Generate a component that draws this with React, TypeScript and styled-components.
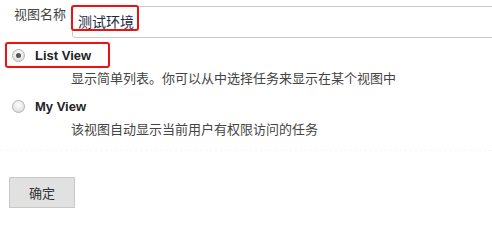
import React from 'react'
import styled, { createGlobalStyle } from 'styled-components';

const GlobalStyle = createGlobalStyle`
	html, body {
		margin: 0;
		padding: 0;
		background: #fff;
		overflow: hidden;
	}
	body {
		font-family: 'Liberation Sans', Arial, 'Noto Sans CJK SC', sans-serif;
		color: #333;
	}
`;

const Page = styled.div`
	width: 492px;
	height: 218px;
	overflow: hidden;
	padding-top: 6px;
	box-sizing: border-box;
`;

const NameRow = styled.div`
	display: flex;
	align-items: flex-start;
`;

const NameLabel = styled.div`
	width: 58px;
	padding-left: 14px;
	padding-top: 1px;
	font-size: 13px;
	line-height: 16px;
	color: #444;
	flex-shrink: 0;
`;

const InputWrap = styled.div`
	position: relative;
	flex-shrink: 0;
	width: 480px;
`;

const NameInput = styled.div`
	height: 32px;
	border: 1px solid #c9c9c9;
	border-radius: 3px;
	padding: 6px 0 0 5px;
	box-sizing: border-box;
	font-size: 14px;
	line-height: 18px;
	color: #1d2a44;
`;

const Highlight = styled.div<{ $left: number; $top: number; $width: number; $height: number }>`
	position: absolute;
	left: ${p => p.$left}px;
	top: ${p => p.$top}px;
	width: ${p => p.$width}px;
	height: ${p => p.$height}px;
	border: 2px solid #ee1111;
	border-radius: 3px;
	box-sizing: border-box;
	pointer-events: none;
`;

const Option = styled.div`
	margin-top: 5px;
`;

const OptionHead = styled.div`
	position: relative;
	display: flex;
	align-items: center;
	height: 24px;
	padding-left: 12px;
`;

const Radio = styled.span<{ $checked?: boolean }>`
	position: relative;
	width: 13px;
	height: 13px;
	border-radius: 50%;
	border: 1px solid #b4b4b4;
	box-sizing: border-box;
	background: radial-gradient(circle at 50% 35%, #fdfdfd 0%, #e6e6e6 60%, #d2d2d2 100%);
	flex-shrink: 0;

	&::after {
		content: '';
		display: ${p => (p.$checked ? 'block' : 'none')};
		position: absolute;
		left: 3px;
		top: 3px;
		width: 5px;
		height: 5px;
		border-radius: 50%;
		background: #555;
	}
`;

const OptionTitle = styled.span`
	margin-left: 10px;
	font-size: 13px;
	font-weight: bold;
	color: #222;
`;

const OptionDesc = styled.div`
	padding-left: 71px;
	margin-top: 2px;
	font-size: 13px;
	line-height: 20px;
	color: #444;
`;

const Divider = styled.div`
	margin-top: 10px;
	border-top: 1px dashed #f7f7f7;
`;

const SubmitButton = styled.button`
	display: block;
	margin: 26px 0 0 9px;
	width: 66px;
	height: 31px;
	background: #e1e1e1;
	border: 1px solid #c9c9c9;
	border-radius: 0;
	font-family: 'Liberation Sans', 'Noto Sans CJK SC', sans-serif;
	font-size: 13px;
	color: #333;
	padding: 0;
`;

const options = [
	{ title: 'List View', desc: '显示简单列表。你可以从中选择任务来显示在某个视图中', checked: true },
	{ title: 'My View', desc: '该视图自动显示当前用户有权限访问的任务', checked: false },
];

export default function App() {
	return (
		<Page>
			<GlobalStyle />
			<NameRow>
				<NameLabel>视图名称</NameLabel>
				<InputWrap>
					<NameInput>测试环境</NameInput>
					<Highlight $left={-1} $top={-1} $width={68} $height={26} />
				</InputWrap>
			</NameRow>
			{options.map((option, index) => (
				<Option key={option.title}>
					<OptionHead>
						<Radio $checked={option.checked} />
						<OptionTitle>{option.title}</OptionTitle>
						{index === 0 && <Highlight $left={5} $top={-1} $width={105} $height={26} />}
					</OptionHead>
					<OptionDesc>{option.desc}</OptionDesc>
				</Option>
			))}
			<Divider />
			<SubmitButton>确定</SubmitButton>
		</Page>
	);
}
